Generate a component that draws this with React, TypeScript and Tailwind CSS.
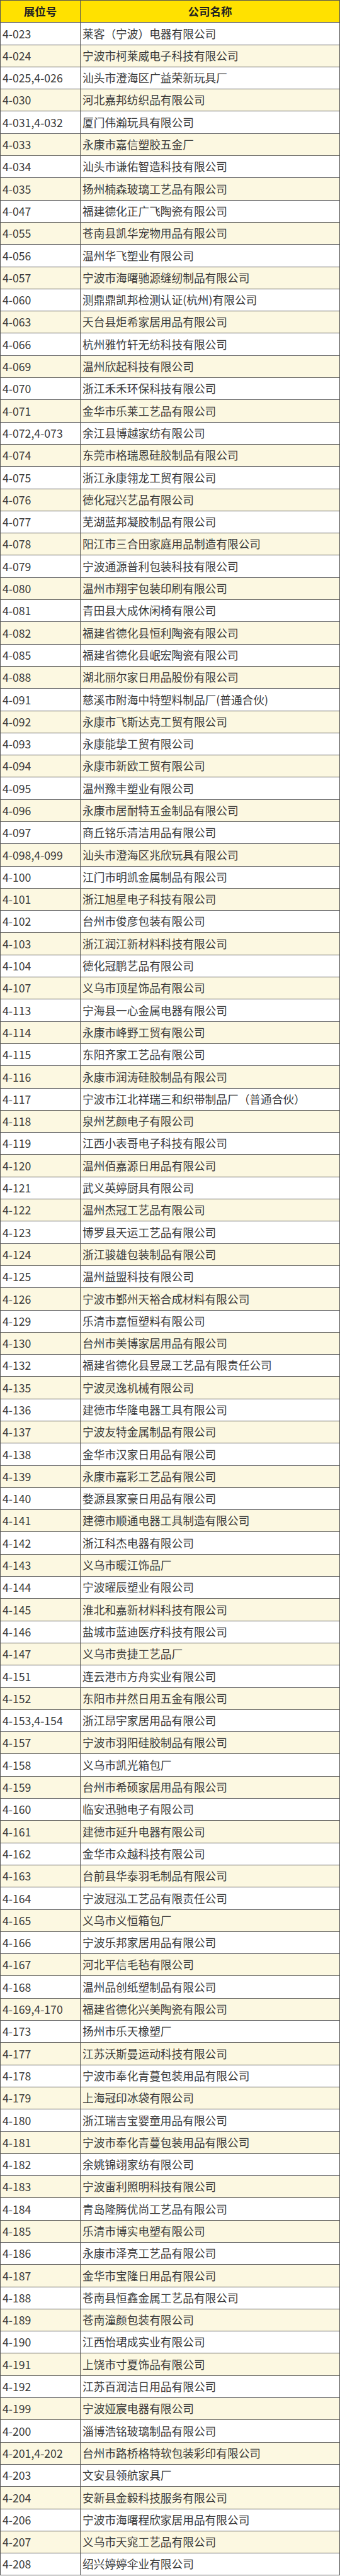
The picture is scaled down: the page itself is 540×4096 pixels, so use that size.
import React from 'react';

const exhibitors: [string, string][] = [
  ['4-023', '莱客（宁波）电器有限公司'],
  ['4-024', '宁波市柯莱威电子科技有限公司'],
  ['4-025,4-026', '汕头市澄海区广益荣新玩具厂'],
  ['4-030', '河北嘉邦纺织品有限公司'],
  ['4-031,4-032', '厦门伟瀚玩具有限公司'],
  ['4-033', '永康市嘉信塑胶五金厂'],
  ['4-034', '汕头市谦佑智造科技有限公司'],
  ['4-035', '扬州楠森玻璃工艺品有限公司'],
  ['4-047', '福建德化正广飞陶瓷有限公司'],
  ['4-055', '苍南县凯华宠物用品有限公司'],
  ['4-056', '温州华飞塑业有限公司'],
  ['4-057', '宁波市海曙驰源缝纫制品有限公司'],
  ['4-060', '测鼎鼎凯邦检测认证(杭州)有限公司'],
  ['4-063', '天台县炬希家居用品有限公司'],
  ['4-066', '杭州雅竹轩无纺科技有限公司'],
  ['4-069', '温州欣起科技有限公司'],
  ['4-070', '浙江禾禾环保科技有限公司'],
  ['4-071', '金华市乐莱工艺品有限公司'],
  ['4-072,4-073', '余江县博越家纺有限公司'],
  ['4-074', '东莞市格瑞恩硅胶制品有限公司'],
  ['4-075', '浙江永康翎龙工贸有限公司'],
  ['4-076', '德化冠兴艺品有限公司'],
  ['4-077', '芜湖蓝邦凝胶制品有限公司'],
  ['4-078', '阳江市三合田家庭用品制造有限公司'],
  ['4-079', '宁波通源普利包装科技有限公司'],
  ['4-080', '温州市翔宇包装印刷有限公司'],
  ['4-081', '青田县大成休闲椅有限公司'],
  ['4-082', '福建省德化县恒利陶瓷有限公司'],
  ['4-085', '福建省德化县岷宏陶瓷有限公司'],
  ['4-088', '湖北丽尔家日用品股份有限公司'],
  ['4-091', '慈溪市附海中特塑料制品厂(普通合伙)'],
  ['4-092', '永康市飞斯达克工贸有限公司'],
  ['4-093', '永康能挚工贸有限公司'],
  ['4-094', '永康市新欧工贸有限公司'],
  ['4-095', '温州豫丰塑业有限公司'],
  ['4-096', '永康市居耐特五金制品有限公司'],
  ['4-097', '商丘铭乐清洁用品有限公司'],
  ['4-098,4-099', '汕头市澄海区兆欣玩具有限公司'],
  ['4-100', '江门市明凯金属制品有限公司'],
  ['4-101', '浙江旭星电子科技有限公司'],
  ['4-102', '台州市俊彦包装有限公司'],
  ['4-103', '浙江润江新材料科技有限公司'],
  ['4-104', '德化冠鹏艺品有限公司'],
  ['4-107', '义乌市顶星饰品有限公司'],
  ['4-113', '宁海县一心金属电器有限公司'],
  ['4-114', '永康市峰野工贸有限公司'],
  ['4-115', '东阳齐家工艺品有限公司'],
  ['4-116', '永康市润涛硅胶制品有限公司'],
  ['4-117', '宁波市江北祥瑞三和织带制品厂（普通合伙）'],
  ['4-118', '泉州艺颜电子有限公司'],
  ['4-119', '江西小表哥电子科技有限公司'],
  ['4-120', '温州佰嘉源日用品有限公司'],
  ['4-121', '武义英婷厨具有限公司'],
  ['4-122', '温州杰冠工艺品有限公司'],
  ['4-123', '博罗县天运工艺品有限公司'],
  ['4-124', '浙江骏雄包装制品有限公司'],
  ['4-125', '温州益盟科技有限公司'],
  ['4-126', '宁波市鄞州天裕合成材料有限公司'],
  ['4-129', '乐清市嘉恒塑料有限公司'],
  ['4-130', '台州市美博家居用品有限公司'],
  ['4-132', '福建省德化县昱晟工艺品有限责任公司'],
  ['4-135', '宁波灵逸机械有限公司'],
  ['4-136', '建德市华隆电器工具有限公司'],
  ['4-137', '宁波友特金属制品有限公司'],
  ['4-138', '金华市汉家日用品有限公司'],
  ['4-139', '永康市嘉彩工艺品有限公司'],
  ['4-140', '婺源县家豪日用品有限公司'],
  ['4-141', '建德市顺通电器工具制造有限公司'],
  ['4-142', '浙江科杰电器有限公司'],
  ['4-143', '义乌市暖江饰品厂'],
  ['4-144', '宁波曜辰塑业有限公司'],
  ['4-145', '淮北和嘉新材料科技有限公司'],
  ['4-146', '盐城市蓝迪医疗科技有限公司'],
  ['4-147', '义乌市贵捷工艺品厂'],
  ['4-151', '连云港市方舟实业有限公司'],
  ['4-152', '东阳市井然日用五金有限公司'],
  ['4-153,4-154', '浙江昂宇家居用品有限公司'],
  ['4-157', '宁波市羽阳硅胶制品有限公司'],
  ['4-158', '义乌市凯光箱包厂'],
  ['4-159', '台州市希硕家居用品有限公司'],
  ['4-160', '临安迅驰电子有限公司'],
  ['4-161', '建德市延升电器有限公司'],
  ['4-162', '金华市众越科技有限公司'],
  ['4-163', '台前县华泰羽毛制品有限公司'],
  ['4-164', '宁波冠泓工艺品有限责任公司'],
  ['4-165', '义乌市义恒箱包厂'],
  ['4-166', '宁波乐邦家居用品有限公司'],
  ['4-167', '河北平信毛毡有限公司'],
  ['4-168', '温州品创纸塑制品有限公司'],
  ['4-169,4-170', '福建省德化兴美陶瓷有限公司'],
  ['4-173', '扬州市乐天橡塑厂'],
  ['4-177', '江苏沃斯曼运动科技有限公司'],
  ['4-178', '宁波市奉化青蔓包装用品有限公司'],
  ['4-179', '上海冠印冰袋有限公司'],
  ['4-180', '浙江瑞吉宝婴童用品有限公司'],
  ['4-181', '宁波市奉化青蔓包装用品有限公司'],
  ['4-182', '余姚锦翊家纺有限公司'],
  ['4-183', '宁波雷利照明科技有限公司'],
  ['4-184', '青岛隆腾优尚工艺品有限公司'],
  ['4-185', '乐清市博实电塑有限公司'],
  ['4-186', '永康市泽亮工艺品有限公司'],
  ['4-187', '金华市宝隆日用品有限公司'],
  ['4-188', '苍南县恒鑫金属工艺品有限公司'],
  ['4-189', '苍南潼颜包装有限公司'],
  ['4-190', '江西怡珺成实业有限公司'],
  ['4-191', '上饶市寸夏饰品有限公司'],
  ['4-192', '江苏百润洁日用品有限公司'],
  ['4-199', '宁波娅宸电器有限公司'],
  ['4-200', '淄博浩铭玻璃制品有限公司'],
  ['4-201,4-202', '台州市路桥格特软包装彩印有限公司'],
  ['4-203', '文安县领航家具厂'],
  ['4-204', '安新县金毅科技服务有限公司'],
  ['4-206', '宁波市海曙程欣家居用品有限公司'],
  ['4-207', '义乌市天窕工艺品有限公司'],
  ['4-208', '绍兴婷婷伞业有限公司'],
];

export default function App() {
  return (
    <div
      className="w-[540px] bg-white text-[#3a3a3a]"
      style={{ fontFamily: '"Noto Sans CJK SC", "Noto Sans", sans-serif' }}
    >
      <div className="border-l border-r border-t border-[#555]">
        {/* Header */}
        <div className="flex h-[35.31px] bg-[#ffe100] border-b border-[#555] text-[#222] font-bold text-[17.5px]">
          <div className="w-[127px] shrink-0 border-r border-[#555] flex items-center justify-center">
            展位号
          </div>
          <div className="flex-1 flex items-center justify-center">公司名称</div>
        </div>

        {exhibitors.map(([booth, name], index) => (
          <div
            key={booth}
            className={`flex h-[35.31px] border-b border-[#555] text-[17.7px] leading-none ${
              index % 2 === 1 ? 'bg-[#fcf8e1]' : 'bg-white'
            }`}
          >
            <div className="w-[127px] shrink-0 border-r border-[#555] flex items-center pl-[3px] whitespace-nowrap">
              {booth}
            </div>
            <div className="flex-1 flex items-center pl-[3px] whitespace-nowrap">{name}</div>
          </div>
        ))}
      </div>
    </div>
  );
}
